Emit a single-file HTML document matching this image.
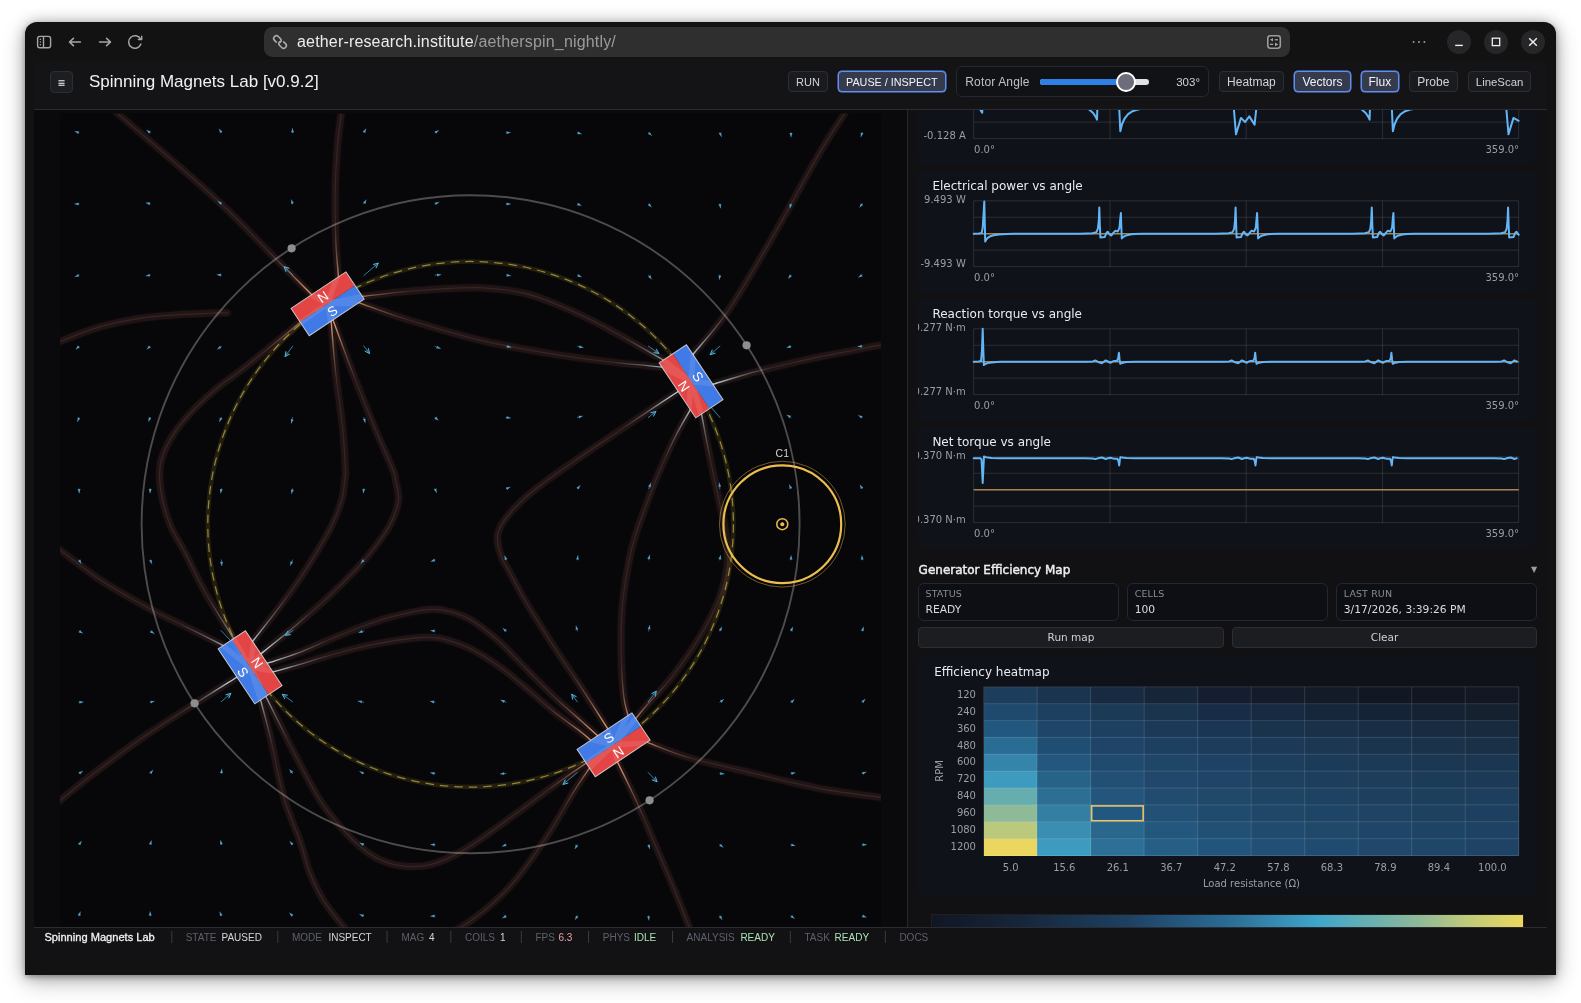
<!DOCTYPE html>
<html lang="en"><head><meta charset="utf-8"><title>Spinning Magnets Lab</title>
<style>
*{box-sizing:border-box;margin:0;padding:0}
html,body{width:1581px;height:1003px;overflow:hidden;background:#fff}
body{position:relative;font-family:"Liberation Sans", sans-serif;color:#d6d9df;-webkit-font-smoothing:antialiased}
.page,.urlt{will-change:transform}
.abs{position:absolute}
.win{position:absolute;left:25px;top:22px;width:1531px;height:952.5px;background:#121213;border-radius:12px 12px 0 0;
 box-shadow:0 6px 22px rgba(0,0,0,.3),0 0 14px rgba(0,0,0,.2),0 2px 5px rgba(0,0,0,.26)}
.url{position:absolute;left:264px;top:27px;width:1026px;height:29.5px;border-radius:8.5px;background:#2f2f30}
.urlt{position:absolute;left:296.7px;top:27px;height:29.5px;line-height:29.5px;font-size:16px;letter-spacing:.17px;color:#ececec;white-space:pre}
.urlt i{font-style:normal;color:#9b9b9e}
.cbtn{position:absolute;width:24px;height:24px;border-radius:50%;background:#262628;top:30px}
.page{position:absolute;left:34px;top:60px;width:1513px;height:906px;background:#131316;border-radius:8px;overflow:hidden}
.hdr{position:absolute;left:0;top:0;width:1513px;height:50px;background:#141417;border-bottom:1px solid #2b2c31}
.btn{position:absolute;top:11.4px;height:21px;line-height:20px;border:1px solid #2c2e35;border-radius:4px;background:#1a1b1f;color:#cfd2d9;font-size:11.5px;text-align:center;white-space:pre}
.btn.on{border-color:#5f8ff0;background:#353b4d;color:#f2f4f8;box-shadow:0 0 0 .5px #5f8ff0}
.title{position:absolute;left:55px;top:10px;height:24px;line-height:24px;font-size:17px;color:#f1f1f3;white-space:pre}
.rotor{position:absolute;left:922px;top:6.4px;width:252.5px;height:31px;border:1px solid #26282e;border-radius:6px;background:#111215}
.sb{position:absolute;left:0;top:867.4px;width:1513px;height:39px;background:#121214;border-top:1px solid #2b2c31}
.sb span{position:absolute;top:2.8px;height:13px;line-height:13px;white-space:pre}
.sb .k{font-size:10px;color:#5d616b;letter-spacing:0}
.sb .v{font-size:10px;color:#d3d6dc}
.sb .g{color:#a9e2b3}
.sb .r{color:#eaa3a3}
.sb .s{color:#3a3d45;font-size:12px;top:1.8px}
.left{position:absolute;left:0;top:50px;width:873.5px;height:817.4px;background:#0a0a0c;border-right:1px solid #26272c;overflow:hidden}
.right{position:absolute;left:874px;top:50px;width:639px;height:817.4px;background:#111113;overflow:hidden;font-family:"DejaVu Sans", "Liberation Sans", sans-serif}
</style></head><body>
<div class="win"></div>
<svg class="abs" style="left:30px;top:30px" width="120" height="24" viewBox="30 30 120 24" fill="none" stroke="#a6a6a8" stroke-width="1.5" stroke-linecap="round" stroke-linejoin="round">
<rect x="37.6" y="36.4" width="13" height="11.3" rx="2.2" stroke-width="1.4"/><path d="M43.5 36.6V47.5" stroke-width="1.4"/><g fill="#a6a6a8" stroke="none"><circle cx="40.4" cy="39.3" r=".75"/><circle cx="40.4" cy="42" r=".75"/><circle cx="40.4" cy="44.7" r=".75"/></g>
<path d="M80.4 42H69.6M73.4 38.3L69.5 42l3.9 3.7" stroke-width="1.6"/>
<path d="M99.6 42h10.8M106.6 38.3l3.9 3.7-3.9 3.7" stroke-width="1.6"/>
<path d="M140.6 39.2a6.3 6.3 0 1 0 .3 4.9"/><path d="M141.7 36.2v3.3h-3.3" stroke-width="1.4"/>
</svg>
<div class="url"></div>
<svg class="abs" style="left:270px;top:32px" width="20" height="20" viewBox="270 32 20 20" fill="none" stroke="#a9a9ab" stroke-width="1.6" stroke-linecap="round" stroke-linejoin="round">
<g transform="translate(277.4 39.4) rotate(45)"><path d="M1.2 2.7H-1.4A2.7 2.7 0 0 1 -1.4 -2.7H1.4A2.7 2.7 0 0 1 4.1 0"/></g>
<g transform="translate(282.6 44.6) rotate(225)"><path d="M1.2 2.7H-1.4A2.7 2.7 0 0 1 -1.4 -2.7H1.4A2.7 2.7 0 0 1 4.1 0"/></g>
</svg>
<div class="urlt">aether-research.institute<i>/aetherspin_nightly/</i></div>
<svg class="abs" style="left:1264px;top:32px" width="20" height="20" viewBox="1264 32 20 20">
<rect x="1267.8" y="35.7" width="12.5" height="12.5" rx="2.6" fill="#232324" stroke="#9c9c9e" stroke-width="1.6"/>
<g fill="#a4a4a6"><path d="M1273 37.9v3.6l-3.1-1.8z"/><rect x="1274.7" y="39.1" width="3.3" height="1.3"/><rect x="1269.9" y="43.7" width="3.3" height="1.3"/><path d="M1275 42.5v3.8l3.3-1.9z"/></g></svg>
<svg class="abs" style="left:1408px;top:38px" width="24" height="8" viewBox="0 0 24 8"><g fill="#9a9a9c"><circle cx="5.6" cy="4" r="1"/><circle cx="11" cy="4" r="1"/><circle cx="16.4" cy="4" r="1"/></g></svg>
<div class="cbtn" style="left:1447px"></div>
<div class="cbtn" style="left:1484px"></div>
<div class="cbtn" style="left:1521px"></div>
<svg class="abs" style="left:1447px;top:30px" width="100" height="24" viewBox="1447 30 100 24" fill="none" stroke="#f0f0f0" stroke-width="1.4" stroke-linecap="butt">
<path d="M1455.2 45.4h7.6"/><rect x="1492.3" y="38.2" width="7.4" height="7.4" stroke-width="1.3"/><path d="M1529.2 38.2l7.6 7.6M1536.8 38.2l-7.6 7.6"/></svg>
<div class="page">
<div class="hdr">
<div class="btn" style="left:16.1px;top:11.2px;width:22.8px;height:21.7px;line-height:22.4px;font-size:9.6px;font-weight:bold;font-family:&quot;DejaVu Sans&quot;,sans-serif;color:#f0f0f0;background:#1d1e22">≡</div>
<div class="title">Spinning Magnets Lab [v0.9.2]</div>
<div class="btn" style="left:754.2px;width:39.5px;font-size:11px">RUN</div>
<div class="btn on" style="left:803.8px;width:108.0px;font-size:10.8px">PAUSE / INSPECT</div>
<div class="rotor"></div>
<div class="abs" style="left:931.3px;top:14px;height:16px;line-height:16px;font-size:12px;letter-spacing:.15px;color:#bcc0c8;white-space:pre">Rotor Angle</div>
<div class="abs" style="left:1006.2px;top:19.2px;width:109.3px;height:5.6px;border-radius:3px;background:#e2e2e4"></div>
<div class="abs" style="left:1006.2px;top:19.2px;width:88px;height:5.6px;border-radius:3px 0 0 3px;background:#2f80e4"></div>
<div class="abs" style="left:1081.7px;top:12px;width:20px;height:20px;border-radius:50%;background:#6c6c7a;border:2px solid #fff"></div>
<div class="abs" style="left:1130px;top:14px;width:36px;text-align:right;height:16px;line-height:16px;font-size:11.5px;color:#cfd2d9">303°</div>
<div class="btn" style="left:1185.1px;width:64.7px;font-size:12px">Heatmap</div>
<div class="btn on" style="left:1260.2px;width:56.7px;font-size:12px">Vectors</div>
<div class="btn on" style="left:1327.0px;width:37.7px;font-size:12px">Flux</div>
<div class="btn" style="left:1375.1px;width:48.5px;font-size:12px">Probe</div>
<div class="btn" style="left:1434.3px;width:62.5px;font-size:11.4px">LineScan</div>
</div>
<div class="left">
<svg class="abs" style="left:0;top:0" width="873.5" height="817.4" viewBox="34 110 873.5 817.4" fill="none">
<defs>
<clipPath id="cv"><rect x="60" y="113.5" width="821" height="821"/></clipPath>
<mask id="mS" maskUnits="userSpaceOnUse" x="34" y="110" width="873.5" height="817.4">
<circle cx="327.6" cy="303.8" r="82" fill="url(#rg)"/>
<circle cx="613.6" cy="744.8" r="82" fill="url(#rg)"/>
</mask>
<mask id="mK" maskUnits="userSpaceOnUse" x="34" y="110" width="873.5" height="817.4">
<circle cx="691.1" cy="381.3" r="82" fill="url(#rg)"/>
<circle cx="250.1" cy="667.3" r="82" fill="url(#rg)"/>
</mask>
<radialGradient id="rg"><stop offset="0" stop-color="#fff"/><stop offset=".3" stop-color="#fff" stop-opacity=".85"/><stop offset=".62" stop-color="#fff" stop-opacity=".3"/><stop offset="1" stop-color="#fff" stop-opacity="0"/></radialGradient>
</defs>
<rect x="60" y="113.5" width="821" height="821" fill="#070709"/>
<g clip-path="url(#cv)">
<defs><path id="fl" d="M319.0 302.0C317.9 300.9 319.9 302.9 312.6 295.6C305.3 288.3 291.1 274.1 275.0 258.0C258.9 241.9 242.4 223.3 216.3 199.3C190.2 175.3 135.7 129.1 118.6 114.2C101.5 99.3 114.8 110.5 114.0 109.7M338.9 282.5C338.7 281.0 338.7 280.5 338.2 273.5C337.7 266.5 336.3 254.5 335.8 240.6C335.3 226.7 334.9 205.8 335.2 189.8C335.5 173.9 336.6 157.6 337.6 144.9C338.6 132.2 340.5 119.5 341.2 113.5C341.9 107.5 341.8 109.8 341.9 109.0M354.6 297.3C356.0 297.2 356.0 297.2 363.5 296.3C371.0 295.4 386.8 293.4 399.8 292.1C412.8 290.9 427.8 289.5 441.7 288.8C455.6 288.1 469.6 287.1 483.5 287.9C497.4 288.7 511.4 290.0 525.4 293.5C539.4 297.0 553.2 302.8 567.3 308.9C581.4 314.9 594.3 321.4 610.0 329.8C625.7 338.2 651.6 353.4 661.5 359.0C671.4 364.6 668.0 362.7 669.3 363.4M352.2 300.3C353.6 300.8 352.8 300.5 360.7 303.3C368.6 306.1 386.3 312.8 399.8 317.2C413.3 321.6 427.8 325.8 441.7 329.8C455.6 333.8 469.6 337.8 483.5 341.0C497.4 344.2 511.4 346.8 525.4 349.3C539.4 351.9 553.2 354.2 567.3 356.3C581.4 358.4 594.3 360.1 610.0 361.9C625.7 363.7 651.4 366.0 661.5 367.0C671.6 368.0 669.0 367.7 670.5 367.9M330.6 315.2C330.7 316.7 330.6 314.8 331.4 324.2C332.2 333.6 333.7 354.5 335.6 371.7C337.5 388.9 341.0 411.2 342.6 427.5C344.2 443.8 345.0 460.6 345.4 469.4C345.8 478.1 345.3 474.9 344.7 480.0C344.1 485.1 343.9 492.3 341.7 499.9C339.5 507.5 336.0 516.8 331.7 525.8C327.4 534.8 321.3 544.5 315.7 553.8C310.1 563.1 304.4 572.1 297.8 581.7C291.2 591.3 283.2 602.0 275.9 611.6C268.6 621.2 258.6 633.7 254.0 639.5C249.4 645.3 249.4 645.4 248.4 646.6M332.5 318.6C333.0 320.0 332.3 318.1 335.6 327.0C338.9 335.9 345.8 354.9 352.3 371.7C358.8 388.4 367.9 411.2 374.7 427.5C381.4 443.8 389.3 460.6 392.8 469.4C396.3 478.1 394.6 474.9 395.5 480.0C396.4 485.1 399.2 492.9 398.5 499.9C397.8 506.9 395.0 514.6 391.5 521.9C388.0 529.2 383.1 536.2 377.5 543.8C371.9 551.4 365.9 558.7 357.6 567.7C349.3 576.7 338.0 588.0 327.7 597.6C317.4 607.2 306.4 616.5 295.8 625.5C285.2 634.5 270.4 646.1 263.9 651.4C257.4 656.7 258.1 656.1 256.9 657.1M302.9 320.2C301.7 321.2 301.8 321.1 295.9 325.9C290.0 330.7 276.5 341.8 267.4 349.2C258.3 356.6 250.1 363.3 241.4 370.0C232.8 376.7 224.1 382.1 215.5 389.4C206.9 396.7 196.9 406.0 189.6 414.0C182.3 422.0 176.2 429.6 171.5 437.4C166.8 445.2 163.0 453.4 161.1 460.7C159.2 468.0 159.4 474.0 159.8 481.4C160.2 488.8 161.8 497.0 163.7 504.8C165.6 512.6 168.1 520.3 171.5 528.1C174.9 535.9 178.8 540.8 184.4 551.4C190.0 562.0 197.4 578.5 205.0 592.0C212.6 605.5 225.0 624.6 230.0 632.6C235.0 640.6 233.9 639.0 234.7 640.3M54.0 344.0C55.0 343.6 52.5 344.3 60.0 341.5C67.5 338.7 85.9 331.0 98.9 327.2C111.9 323.4 124.9 320.8 137.8 318.7C150.8 316.6 163.7 315.8 176.6 314.8C189.5 313.9 207.1 313.3 215.5 313.0C223.9 312.7 225.2 313.0 227.2 313.0M687.8 361.0C688.7 359.9 686.5 362.6 693.4 354.0C700.3 345.4 715.6 329.4 729.0 309.5C742.4 289.6 759.0 260.5 774.0 234.6C789.0 208.7 807.2 174.1 819.0 153.9C830.8 133.7 839.8 121.0 844.5 113.5C849.2 106.0 846.6 109.8 847.0 109.0M705.4 386.5C706.8 386.1 705.1 386.6 714.0 384.0C722.9 381.4 741.5 375.3 759.0 370.8C776.5 366.3 798.7 361.3 819.0 357.0C839.3 352.7 869.8 347.2 881.0 345.0C892.2 342.8 885.2 344.2 886.0 344.0M684.1 387.6C682.9 388.4 682.4 388.7 676.6 392.5C670.8 396.3 659.7 403.5 649.5 410.3C639.3 417.1 626.9 425.6 615.6 433.2C604.3 440.8 593.0 448.3 581.7 456.1C570.4 463.9 557.7 472.5 547.8 479.8C537.9 487.1 529.5 493.7 522.4 500.2C515.3 506.7 509.5 513.2 505.4 518.8C501.3 524.4 498.9 529.2 497.8 534.0C496.7 538.8 497.8 543.3 498.6 547.6C499.5 551.9 501.2 556.2 502.9 560.0C504.6 563.8 504.9 563.5 508.7 570.3C512.5 577.1 518.0 588.5 525.4 601.0C532.8 613.5 544.0 631.2 553.3 645.6C562.6 660.0 572.4 674.0 581.3 687.5C590.1 701.0 601.4 718.8 606.4 726.6C611.4 734.4 610.5 732.9 611.3 734.2M692.9 405.0C692.1 406.3 691.5 407.5 688.5 412.9C685.5 418.3 680.0 427.2 674.9 437.5C669.8 447.8 662.8 463.4 658.0 474.7C653.2 486.0 649.8 495.4 646.1 505.3C642.4 515.2 638.7 524.9 635.9 534.0C633.1 543.1 631.5 547.8 629.2 560.0C626.9 572.2 623.5 591.5 622.2 607.3C620.9 623.1 620.9 640.1 621.2 655.0C621.5 669.9 622.7 686.7 623.8 696.5C624.9 706.3 626.6 709.6 627.6 714.0C628.6 718.4 629.2 721.3 629.5 722.8M700.2 407.2C700.5 408.6 700.3 407.6 701.9 416.0C703.5 424.4 707.0 443.1 709.9 457.4C712.8 471.7 716.6 488.7 719.4 502.0C722.2 515.3 725.2 526.4 726.5 537.0C727.8 547.6 728.6 555.7 727.4 565.8C726.2 575.9 723.9 586.0 719.4 597.7C714.9 609.4 708.3 622.7 700.3 636.0C692.3 649.3 680.6 665.7 671.6 677.4C662.6 689.1 651.7 699.6 646.1 706.0C640.5 712.4 640.4 712.9 638.1 715.7C635.8 718.5 633.3 721.5 632.4 722.6M261.4 665.3C262.8 664.8 263.5 664.5 269.9 662.4C276.3 660.3 289.8 656.2 299.8 652.4C309.8 648.6 319.7 643.6 329.7 639.5C339.7 635.4 349.6 631.2 359.6 627.5C369.6 623.8 379.4 620.3 389.5 617.5C399.6 614.7 411.3 611.9 420.0 610.6C428.7 609.3 433.4 608.5 441.7 609.9C450.0 611.3 460.3 614.1 469.6 619.1C478.9 624.1 488.2 631.9 497.5 640.0C506.8 648.1 516.1 658.7 525.4 668.0C534.7 677.3 544.0 687.1 553.3 695.9C562.6 704.7 574.3 714.7 581.3 721.0C588.3 727.3 591.8 730.5 595.2 733.6C598.6 736.7 600.8 738.6 601.9 739.6M266.2 673.8C267.7 673.4 269.3 673.0 274.9 671.4C280.5 669.8 290.7 667.1 299.8 664.4C308.9 661.7 319.7 658.2 329.7 655.4C339.7 652.6 349.6 649.7 359.6 647.4C369.6 645.1 379.4 643.1 389.5 641.5C399.6 639.9 411.3 638.0 420.0 637.5C428.7 637.0 433.4 636.8 441.7 638.6C450.0 640.4 460.3 644.0 469.6 648.4C478.9 652.8 488.2 658.7 497.5 665.2C506.8 671.7 516.1 679.8 525.4 687.5C534.7 695.2 544.0 703.8 553.3 711.2C562.6 718.7 575.2 727.5 581.3 732.2C587.3 736.9 587.1 737.1 589.6 739.2C592.1 741.3 595.3 744.0 596.5 745.0M263.0 690.7C263.6 692.0 262.5 689.7 267.0 698.7C271.5 707.7 284.5 733.8 290.0 744.7C295.5 755.6 295.0 754.7 300.0 764.0C305.0 773.3 313.4 790.0 320.2 800.5C326.9 811.0 333.8 819.0 340.5 826.8C347.2 834.5 353.9 841.4 360.7 847.0C367.4 852.6 373.6 857.0 381.0 860.2C388.4 863.4 396.9 865.6 405.3 866.3C413.7 867.0 422.2 866.8 431.6 864.3C441.0 861.8 451.8 856.7 461.9 851.1C472.0 845.5 482.2 838.0 492.3 830.9C502.4 823.8 512.6 816.0 522.7 808.6C532.8 801.2 542.9 793.6 553.0 786.3C563.1 779.0 577.1 769.4 583.4 765.0C589.7 760.6 589.5 760.7 590.8 759.8M594.5 760.5C593.6 761.8 593.0 762.7 589.5 768.0C586.0 773.3 579.4 782.6 573.3 792.4C567.2 802.2 559.8 816.0 553.0 826.8C546.2 837.6 539.5 847.8 532.8 857.2C526.1 866.7 519.4 875.8 512.6 883.5C505.9 891.2 499.1 897.6 492.3 903.7C485.6 909.8 477.5 915.9 472.1 919.9C466.7 923.9 463.2 925.8 459.9 928.0C456.5 930.2 453.3 932.2 452.0 933.0M614.1 754.9C614.8 756.2 614.1 754.8 618.0 763.0C621.9 771.2 631.1 789.5 637.7 804.0C644.3 818.5 650.9 834.7 657.4 850.0C663.9 865.3 671.6 882.8 677.0 896.0C682.4 909.2 687.8 923.5 690.0 929.0M640.5 739.9C642.0 740.4 640.8 740.0 649.0 743.0C657.2 746.0 672.2 752.8 690.0 758.0C707.8 763.2 734.0 768.8 756.0 774.0C778.0 779.2 801.2 785.1 822.0 789.0C842.8 792.9 869.8 795.9 880.5 797.4C891.2 798.9 885.1 797.9 886.0 798.0M54.0 546.0C55.0 546.7 52.0 544.2 60.0 550.0C68.0 555.8 86.7 571.0 102.0 581.0C117.3 591.0 138.7 602.7 152.0 610.0C165.3 617.3 170.2 619.0 181.7 624.7C193.2 630.4 213.1 640.4 221.0 644.4C228.9 648.4 227.7 647.8 229.0 648.4M241.6 674.2C240.3 675.0 241.8 674.1 234.0 679.0C226.2 683.9 210.3 693.8 195.0 703.6C179.7 713.4 159.0 726.3 142.0 738.0C125.0 749.7 106.7 763.6 93.0 774.0C79.3 784.4 66.5 795.4 60.0 800.6C53.5 805.8 55.0 804.3 54.0 805.0M258.3 691.3C258.7 692.7 258.6 692.2 260.6 700.0C262.6 707.8 266.6 721.8 270.5 738.0C274.4 754.2 278.8 779.8 283.7 797.0C288.6 814.2 295.6 828.3 300.0 841.0C304.4 853.7 306.1 863.3 310.1 873.4C314.2 883.5 318.6 892.6 324.3 901.7C330.0 910.8 340.4 922.8 344.5 928.0C348.6 933.2 348.2 932.2 349.0 933.0"/></defs>
<g stroke-linecap="round" stroke-linejoin="round">
<use href="#fl" stroke="#6b3a38" stroke-opacity=".07" stroke-width="9.5"/>
<use href="#fl" stroke="#6b3a38" stroke-opacity=".2" stroke-width="7"/>
<use href="#fl" stroke="#c9a09a" stroke-opacity=".13" stroke-width="1.3"/>
<g mask="url(#mS)"><use href="#fl" stroke="#f7ab82" stroke-opacity=".9" stroke-width="1.4"/></g>
<g mask="url(#mK)"><use href="#fl" stroke="#c8edf7" stroke-opacity=".95" stroke-width="1.4"/></g></g>
<circle cx="470.6" cy="524.3" r="329.0" stroke="#fff" stroke-opacity=".28" stroke-width="1.9"/>
<circle cx="470.6" cy="524.3" r="262.8" stroke="#5a4e1e" stroke-opacity=".35" stroke-width="4.5"/>
<circle cx="470.6" cy="524.3" r="262.8" stroke="#cdb54c" stroke-opacity=".68" stroke-width="1.25" stroke-dasharray="8.5 6"/>
<circle cx="291.6" cy="248.3" r="4.1" fill="#8d8d8d"/>
<circle cx="746.6" cy="345.3" r="4.1" fill="#8d8d8d"/>
<circle cx="649.6" cy="800.3" r="4.1" fill="#8d8d8d"/>
<circle cx="194.6" cy="703.3" r="4.1" fill="#8d8d8d"/>
<g stroke-linecap="round"><path d="M79.0 132.7L75.0 131.4" stroke="#4aa6cf" stroke-opacity=".55" stroke-width="1"/><path d="M75.0 131.4L79.1 131.2L78.1 134.0Z" fill="#52aed6" fill-opacity=".88"/><path d="M79.0 203.9L74.8 203.9" stroke="#4aa6cf" stroke-opacity=".55" stroke-width="1"/><path d="M74.8 203.9L78.6 202.4L78.6 205.4Z" fill="#52aed6" fill-opacity=".88"/><path d="M79.0 275.1L75.1 276.7" stroke="#4aa6cf" stroke-opacity=".55" stroke-width="1"/><path d="M75.1 276.7L78.1 273.9L79.2 276.6Z" fill="#52aed6" fill-opacity=".88"/><path d="M79.0 346.3L76.1 349.3" stroke="#4aa6cf" stroke-opacity=".55" stroke-width="1"/><path d="M76.1 349.3L77.6 345.6L79.8 347.6Z" fill="#52aed6" fill-opacity=".88"/><path d="M79.0 417.5L77.6 421.5" stroke="#4aa6cf" stroke-opacity=".55" stroke-width="1"/><path d="M77.6 421.5L77.5 417.4L80.3 418.4Z" fill="#52aed6" fill-opacity=".88"/><path d="M79.0 488.7L79.3 492.9" stroke="#4aa6cf" stroke-opacity=".55" stroke-width="1"/><path d="M79.3 492.9L77.5 489.2L80.5 489.0Z" fill="#52aed6" fill-opacity=".88"/><path d="M79.0 559.9L81.1 563.5" stroke="#4aa6cf" stroke-opacity=".55" stroke-width="1"/><path d="M81.1 563.5L77.9 561.0L80.5 559.5Z" fill="#52aed6" fill-opacity=".88"/><path d="M79.0 631.1L82.6 633.2" stroke="#4aa6cf" stroke-opacity=".55" stroke-width="1"/><path d="M82.6 633.2L78.6 632.6L80.1 630.0Z" fill="#52aed6" fill-opacity=".88"/><path d="M79.0 702.3L83.2 702.1" stroke="#4aa6cf" stroke-opacity=".55" stroke-width="1"/><path d="M83.2 702.1L79.5 703.8L79.3 700.8Z" fill="#52aed6" fill-opacity=".88"/><path d="M79.0 773.5L82.6 771.3" stroke="#4aa6cf" stroke-opacity=".55" stroke-width="1"/><path d="M82.6 771.3L80.1 774.6L78.6 772.0Z" fill="#52aed6" fill-opacity=".88"/><path d="M79.0 844.7L81.5 841.3" stroke="#4aa6cf" stroke-opacity=".55" stroke-width="1"/><path d="M81.5 841.3L80.4 845.3L78.0 843.5Z" fill="#52aed6" fill-opacity=".88"/><path d="M79.0 915.9L80.3 911.9" stroke="#4aa6cf" stroke-opacity=".55" stroke-width="1"/><path d="M80.3 911.9L80.5 916.0L77.7 915.0Z" fill="#52aed6" fill-opacity=".88"/><path d="M150.2 132.7L146.8 130.2" stroke="#4aa6cf" stroke-opacity=".55" stroke-width="1"/><path d="M146.8 130.2L150.8 131.3L149.0 133.7Z" fill="#52aed6" fill-opacity=".88"/><path d="M150.2 203.9L146.2 202.8" stroke="#4aa6cf" stroke-opacity=".55" stroke-width="1"/><path d="M146.2 202.8L150.2 202.3L149.4 205.2Z" fill="#52aed6" fill-opacity=".88"/><path d="M150.2 275.1L146.1 275.9" stroke="#4aa6cf" stroke-opacity=".55" stroke-width="1"/><path d="M146.1 275.9L149.5 273.7L150.1 276.6Z" fill="#52aed6" fill-opacity=".88"/><path d="M150.2 346.3L147.0 349.0" stroke="#4aa6cf" stroke-opacity=".55" stroke-width="1"/><path d="M147.0 349.0L148.9 345.4L150.8 347.7Z" fill="#52aed6" fill-opacity=".88"/><path d="M150.2 417.5L148.5 421.3" stroke="#4aa6cf" stroke-opacity=".55" stroke-width="1"/><path d="M148.5 421.3L148.7 417.2L151.4 418.5Z" fill="#52aed6" fill-opacity=".88"/><path d="M150.2 488.7L150.1 492.9" stroke="#4aa6cf" stroke-opacity=".55" stroke-width="1"/><path d="M150.1 492.9L148.7 489.1L151.7 489.1Z" fill="#52aed6" fill-opacity=".88"/><path d="M150.2 559.9L151.8 563.8" stroke="#4aa6cf" stroke-opacity=".55" stroke-width="1"/><path d="M151.8 563.8L149.0 560.8L151.7 559.7Z" fill="#52aed6" fill-opacity=".88"/><path d="M150.2 631.1L154.2 633.5" stroke="#4aa6cf" stroke-opacity=".55" stroke-width="1"/><path d="M154.2 633.5L150.1 632.8L151.7 630.3Z" fill="#52aed6" fill-opacity=".88"/><path d="M150.2 702.3L154.2 701.2" stroke="#4aa6cf" stroke-opacity=".55" stroke-width="1"/><path d="M154.2 701.2L151.0 703.6L150.2 700.7Z" fill="#52aed6" fill-opacity=".88"/><path d="M150.2 773.5L152.8 770.2" stroke="#4aa6cf" stroke-opacity=".55" stroke-width="1"/><path d="M152.8 770.2L151.6 774.1L149.3 772.3Z" fill="#52aed6" fill-opacity=".88"/><path d="M150.2 844.7L151.3 840.7" stroke="#4aa6cf" stroke-opacity=".55" stroke-width="1"/><path d="M151.3 840.7L151.8 844.7L148.9 843.9Z" fill="#52aed6" fill-opacity=".88"/><path d="M150.2 915.9L150.2 911.7" stroke="#4aa6cf" stroke-opacity=".55" stroke-width="1"/><path d="M150.2 911.7L151.7 915.5L148.7 915.5Z" fill="#52aed6" fill-opacity=".88"/><path d="M221.4 132.7L219.2 129.1" stroke="#4aa6cf" stroke-opacity=".55" stroke-width="1"/><path d="M219.2 129.1L222.5 131.6L219.9 133.1Z" fill="#52aed6" fill-opacity=".88"/><path d="M221.4 203.9L218.1 201.3" stroke="#4aa6cf" stroke-opacity=".55" stroke-width="1"/><path d="M218.1 201.3L222.0 202.5L220.2 204.8Z" fill="#52aed6" fill-opacity=".88"/><path d="M221.4 275.1L217.1 274.7" stroke="#4aa6cf" stroke-opacity=".55" stroke-width="1"/><path d="M217.1 274.7L221.0 273.6L220.8 276.6Z" fill="#52aed6" fill-opacity=".88"/><path d="M221.4 346.3L217.5 349.2" stroke="#4aa6cf" stroke-opacity=".55" stroke-width="1"/><path d="M217.5 349.2L219.6 345.7L221.4 348.1Z" fill="#52aed6" fill-opacity=".88"/><path d="M221.4 417.5L219.5 421.5" stroke="#4aa6cf" stroke-opacity=".55" stroke-width="1"/><path d="M219.5 421.5L219.8 417.5L222.5 418.7Z" fill="#52aed6" fill-opacity=".88"/><path d="M221.4 488.7L220.7 493.1" stroke="#4aa6cf" stroke-opacity=".55" stroke-width="1"/><path d="M220.7 493.1L219.8 489.1L222.8 489.6Z" fill="#52aed6" fill-opacity=".88"/><path d="M221.4 559.9L221.8 565.7" stroke="#4aa6cf" stroke-opacity=".55" stroke-width="1"/><path d="M221.8 565.7L220.0 562.0L223.0 561.8Z" fill="#52aed6" fill-opacity=".88"/><path d="M221.4 773.5L221.8 769.2" stroke="#4aa6cf" stroke-opacity=".55" stroke-width="1"/><path d="M221.8 769.2L222.9 773.1L219.9 772.9Z" fill="#52aed6" fill-opacity=".88"/><path d="M221.4 844.7L220.6 840.6" stroke="#4aa6cf" stroke-opacity=".55" stroke-width="1"/><path d="M220.6 840.6L222.8 844.0L219.9 844.6Z" fill="#52aed6" fill-opacity=".88"/><path d="M221.4 915.9L219.8 912.0" stroke="#4aa6cf" stroke-opacity=".55" stroke-width="1"/><path d="M219.8 912.0L222.6 915.0L219.9 916.1Z" fill="#52aed6" fill-opacity=".88"/><path d="M292.6 132.7L292.4 128.5" stroke="#4aa6cf" stroke-opacity=".55" stroke-width="1"/><path d="M292.4 128.5L294.1 132.2L291.1 132.4Z" fill="#52aed6" fill-opacity=".88"/><path d="M292.6 203.9L291.5 199.9" stroke="#4aa6cf" stroke-opacity=".55" stroke-width="1"/><path d="M291.5 199.9L293.9 203.1L291.0 203.9Z" fill="#52aed6" fill-opacity=".88"/><path d="M292.6 417.5L291.4 423.2" stroke="#4aa6cf" stroke-opacity=".55" stroke-width="1"/><path d="M291.4 423.2L290.7 419.1L293.6 419.8Z" fill="#52aed6" fill-opacity=".88"/><path d="M292.6 488.7L291.6 493.4" stroke="#4aa6cf" stroke-opacity=".55" stroke-width="1"/><path d="M291.6 493.4L290.9 489.4L293.9 490.0Z" fill="#52aed6" fill-opacity=".88"/><path d="M292.6 559.9L290.4 565.3" stroke="#4aa6cf" stroke-opacity=".55" stroke-width="1"/><path d="M290.4 565.3L290.4 561.2L293.2 562.3Z" fill="#52aed6" fill-opacity=".88"/><path d="M292.6 773.5L289.7 769.6" stroke="#4aa6cf" stroke-opacity=".55" stroke-width="1"/><path d="M289.7 769.6L293.2 771.7L290.8 773.5Z" fill="#52aed6" fill-opacity=".88"/><path d="M292.6 844.7L289.9 841.5" stroke="#4aa6cf" stroke-opacity=".55" stroke-width="1"/><path d="M289.9 841.5L293.5 843.4L291.2 845.3Z" fill="#52aed6" fill-opacity=".88"/><path d="M292.6 915.9L289.6 913.0" stroke="#4aa6cf" stroke-opacity=".55" stroke-width="1"/><path d="M289.6 913.0L293.3 914.5L291.3 916.7Z" fill="#52aed6" fill-opacity=".88"/><path d="M363.8 132.7L365.9 129.1" stroke="#4aa6cf" stroke-opacity=".55" stroke-width="1"/><path d="M365.9 129.1L365.3 133.1L362.7 131.6Z" fill="#52aed6" fill-opacity=".88"/><path d="M363.8 203.9L366.2 199.9" stroke="#4aa6cf" stroke-opacity=".55" stroke-width="1"/><path d="M366.2 199.9L365.5 204.0L363.0 202.4Z" fill="#52aed6" fill-opacity=".88"/><path d="M363.8 417.5L365.2 422.6" stroke="#4aa6cf" stroke-opacity=".55" stroke-width="1"/><path d="M365.2 422.6L362.8 419.3L365.6 418.5Z" fill="#52aed6" fill-opacity=".88"/><path d="M363.8 488.7L363.3 492.9" stroke="#4aa6cf" stroke-opacity=".55" stroke-width="1"/><path d="M363.3 492.9L362.3 488.9L365.2 489.3Z" fill="#52aed6" fill-opacity=".88"/><path d="M363.8 559.9L361.1 563.1" stroke="#4aa6cf" stroke-opacity=".55" stroke-width="1"/><path d="M361.1 563.1L362.4 559.2L364.7 561.2Z" fill="#52aed6" fill-opacity=".88"/><path d="M363.8 631.1L358.7 632.5" stroke="#4aa6cf" stroke-opacity=".55" stroke-width="1"/><path d="M358.7 632.5L362.0 630.1L362.8 632.9Z" fill="#52aed6" fill-opacity=".88"/><path d="M363.8 702.3L358.1 701.1" stroke="#4aa6cf" stroke-opacity=".55" stroke-width="1"/><path d="M358.1 701.1L362.2 700.4L361.5 703.3Z" fill="#52aed6" fill-opacity=".88"/><path d="M363.8 773.5L359.8 771.6" stroke="#4aa6cf" stroke-opacity=".55" stroke-width="1"/><path d="M359.8 771.6L363.8 771.9L362.6 774.6Z" fill="#52aed6" fill-opacity=".88"/><path d="M363.8 844.7L360.0 843.0" stroke="#4aa6cf" stroke-opacity=".55" stroke-width="1"/><path d="M360.0 843.0L364.1 843.2L362.8 845.9Z" fill="#52aed6" fill-opacity=".88"/><path d="M363.8 915.9L359.8 914.5" stroke="#4aa6cf" stroke-opacity=".55" stroke-width="1"/><path d="M359.8 914.5L363.9 914.4L362.9 917.2Z" fill="#52aed6" fill-opacity=".88"/><path d="M435.0 132.7L438.6 130.6" stroke="#4aa6cf" stroke-opacity=".55" stroke-width="1"/><path d="M438.6 130.6L436.1 133.8L434.6 131.2Z" fill="#52aed6" fill-opacity=".88"/><path d="M435.0 203.9L438.9 202.3" stroke="#4aa6cf" stroke-opacity=".55" stroke-width="1"/><path d="M438.9 202.3L435.9 205.1L434.8 202.4Z" fill="#52aed6" fill-opacity=".88"/><path d="M435.0 275.1L440.8 274.7" stroke="#4aa6cf" stroke-opacity=".55" stroke-width="1"/><path d="M440.8 274.7L437.1 276.5L436.9 273.5Z" fill="#52aed6" fill-opacity=".88"/><path d="M435.0 346.3L440.4 348.5" stroke="#4aa6cf" stroke-opacity=".55" stroke-width="1"/><path d="M440.4 348.5L436.3 348.5L437.4 345.7Z" fill="#52aed6" fill-opacity=".88"/><path d="M435.0 417.5L438.2 420.2" stroke="#4aa6cf" stroke-opacity=".55" stroke-width="1"/><path d="M438.2 420.2L434.3 418.9L436.3 416.6Z" fill="#52aed6" fill-opacity=".88"/><path d="M435.0 488.7L436.5 492.6" stroke="#4aa6cf" stroke-opacity=".55" stroke-width="1"/><path d="M436.5 492.6L433.7 489.6L436.5 488.5Z" fill="#52aed6" fill-opacity=".88"/><path d="M435.0 559.9L431.1 561.4" stroke="#4aa6cf" stroke-opacity=".55" stroke-width="1"/><path d="M431.1 561.4L434.1 558.6L435.2 561.4Z" fill="#52aed6" fill-opacity=".88"/><path d="M435.0 631.1L430.8 630.6" stroke="#4aa6cf" stroke-opacity=".55" stroke-width="1"/><path d="M430.8 630.6L434.8 629.6L434.4 632.5Z" fill="#52aed6" fill-opacity=".88"/><path d="M435.0 702.3L430.3 701.3" stroke="#4aa6cf" stroke-opacity=".55" stroke-width="1"/><path d="M430.3 701.3L434.3 700.6L433.7 703.6Z" fill="#52aed6" fill-opacity=".88"/><path d="M435.0 773.5L430.6 772.8" stroke="#4aa6cf" stroke-opacity=".55" stroke-width="1"/><path d="M430.6 772.8L434.6 771.9L434.1 774.9Z" fill="#52aed6" fill-opacity=".88"/><path d="M435.0 844.7L430.8 844.6" stroke="#4aa6cf" stroke-opacity=".55" stroke-width="1"/><path d="M430.8 844.6L434.6 843.2L434.6 846.2Z" fill="#52aed6" fill-opacity=".88"/><path d="M435.0 915.9L430.8 916.2" stroke="#4aa6cf" stroke-opacity=".55" stroke-width="1"/><path d="M430.8 916.2L434.5 914.4L434.7 917.4Z" fill="#52aed6" fill-opacity=".88"/><path d="M506.2 132.7L510.4 132.4" stroke="#4aa6cf" stroke-opacity=".55" stroke-width="1"/><path d="M510.4 132.4L506.7 134.2L506.5 131.2Z" fill="#52aed6" fill-opacity=".88"/><path d="M506.2 203.9L510.4 204.0" stroke="#4aa6cf" stroke-opacity=".55" stroke-width="1"/><path d="M510.4 204.0L506.6 205.4L506.6 202.4Z" fill="#52aed6" fill-opacity=".88"/><path d="M506.2 275.1L510.6 275.8" stroke="#4aa6cf" stroke-opacity=".55" stroke-width="1"/><path d="M510.6 275.8L506.6 276.7L507.1 273.7Z" fill="#52aed6" fill-opacity=".88"/><path d="M506.2 346.3L510.9 347.3" stroke="#4aa6cf" stroke-opacity=".55" stroke-width="1"/><path d="M510.9 347.3L506.9 348.0L507.5 345.0Z" fill="#52aed6" fill-opacity=".88"/><path d="M506.2 417.5L510.4 418.0" stroke="#4aa6cf" stroke-opacity=".55" stroke-width="1"/><path d="M510.4 418.0L506.4 419.0L506.8 416.1Z" fill="#52aed6" fill-opacity=".88"/><path d="M506.2 488.7L510.1 487.2" stroke="#4aa6cf" stroke-opacity=".55" stroke-width="1"/><path d="M510.1 487.2L507.1 490.0L506.0 487.2Z" fill="#52aed6" fill-opacity=".88"/><path d="M506.2 559.9L504.7 556.0" stroke="#4aa6cf" stroke-opacity=".55" stroke-width="1"/><path d="M504.7 556.0L507.5 559.0L504.7 560.1Z" fill="#52aed6" fill-opacity=".88"/><path d="M506.2 631.1L503.0 628.4" stroke="#4aa6cf" stroke-opacity=".55" stroke-width="1"/><path d="M503.0 628.4L506.9 629.7L504.9 632.0Z" fill="#52aed6" fill-opacity=".88"/><path d="M506.2 702.3L500.8 700.1" stroke="#4aa6cf" stroke-opacity=".55" stroke-width="1"/><path d="M500.8 700.1L504.9 700.1L503.8 702.9Z" fill="#52aed6" fill-opacity=".88"/><path d="M506.2 773.5L500.4 773.9" stroke="#4aa6cf" stroke-opacity=".55" stroke-width="1"/><path d="M500.4 773.9L504.1 772.1L504.3 775.1Z" fill="#52aed6" fill-opacity=".88"/><path d="M506.2 844.7L502.3 846.3" stroke="#4aa6cf" stroke-opacity=".55" stroke-width="1"/><path d="M502.3 846.3L505.3 843.5L506.4 846.2Z" fill="#52aed6" fill-opacity=".88"/><path d="M506.2 915.9L502.6 918.0" stroke="#4aa6cf" stroke-opacity=".55" stroke-width="1"/><path d="M502.6 918.0L505.1 914.8L506.6 917.4Z" fill="#52aed6" fill-opacity=".88"/><path d="M577.4 132.7L581.4 134.1" stroke="#4aa6cf" stroke-opacity=".55" stroke-width="1"/><path d="M581.4 134.1L577.3 134.2L578.3 131.4Z" fill="#52aed6" fill-opacity=".88"/><path d="M577.4 203.9L581.2 205.6" stroke="#4aa6cf" stroke-opacity=".55" stroke-width="1"/><path d="M581.2 205.6L577.1 205.4L578.4 202.7Z" fill="#52aed6" fill-opacity=".88"/><path d="M577.4 275.1L581.4 277.0" stroke="#4aa6cf" stroke-opacity=".55" stroke-width="1"/><path d="M581.4 277.0L577.4 276.7L578.6 274.0Z" fill="#52aed6" fill-opacity=".88"/><path d="M577.4 346.3L583.1 347.5" stroke="#4aa6cf" stroke-opacity=".55" stroke-width="1"/><path d="M583.1 347.5L579.0 348.2L579.7 345.3Z" fill="#52aed6" fill-opacity=".88"/><path d="M577.4 417.5L582.5 416.1" stroke="#4aa6cf" stroke-opacity=".55" stroke-width="1"/><path d="M582.5 416.1L579.2 418.5L578.4 415.7Z" fill="#52aed6" fill-opacity=".88"/><path d="M577.4 488.7L580.1 485.5" stroke="#4aa6cf" stroke-opacity=".55" stroke-width="1"/><path d="M580.1 485.5L578.8 489.4L576.5 487.4Z" fill="#52aed6" fill-opacity=".88"/><path d="M577.4 559.9L577.9 555.7" stroke="#4aa6cf" stroke-opacity=".55" stroke-width="1"/><path d="M577.9 555.7L578.9 559.7L576.0 559.3Z" fill="#52aed6" fill-opacity=".88"/><path d="M577.4 631.1L576.0 626.0" stroke="#4aa6cf" stroke-opacity=".55" stroke-width="1"/><path d="M576.0 626.0L578.4 629.3L575.6 630.1Z" fill="#52aed6" fill-opacity=".88"/><path d="M577.4 844.7L575.0 848.7" stroke="#4aa6cf" stroke-opacity=".55" stroke-width="1"/><path d="M575.0 848.7L575.7 844.6L578.2 846.2Z" fill="#52aed6" fill-opacity=".88"/><path d="M577.4 915.9L575.3 919.5" stroke="#4aa6cf" stroke-opacity=".55" stroke-width="1"/><path d="M575.3 919.5L575.9 915.5L578.5 917.0Z" fill="#52aed6" fill-opacity=".88"/><path d="M648.6 132.7L651.6 135.6" stroke="#4aa6cf" stroke-opacity=".55" stroke-width="1"/><path d="M651.6 135.6L647.9 134.1L649.9 131.9Z" fill="#52aed6" fill-opacity=".88"/><path d="M648.6 203.9L651.3 207.1" stroke="#4aa6cf" stroke-opacity=".55" stroke-width="1"/><path d="M651.3 207.1L647.7 205.2L650.0 203.3Z" fill="#52aed6" fill-opacity=".88"/><path d="M648.6 275.1L651.5 279.0" stroke="#4aa6cf" stroke-opacity=".55" stroke-width="1"/><path d="M651.5 279.0L648.0 276.9L650.4 275.1Z" fill="#52aed6" fill-opacity=".88"/><path d="M648.6 488.7L650.8 483.3" stroke="#4aa6cf" stroke-opacity=".55" stroke-width="1"/><path d="M650.8 483.3L650.8 487.4L648.0 486.3Z" fill="#52aed6" fill-opacity=".88"/><path d="M648.6 559.9L649.6 555.2" stroke="#4aa6cf" stroke-opacity=".55" stroke-width="1"/><path d="M649.6 555.2L650.3 559.2L647.3 558.6Z" fill="#52aed6" fill-opacity=".88"/><path d="M648.6 631.1L649.8 625.4" stroke="#4aa6cf" stroke-opacity=".55" stroke-width="1"/><path d="M649.8 625.4L650.5 629.5L647.6 628.8Z" fill="#52aed6" fill-opacity=".88"/><path d="M648.6 844.7L649.7 848.7" stroke="#4aa6cf" stroke-opacity=".55" stroke-width="1"/><path d="M649.7 848.7L647.3 845.5L650.2 844.7Z" fill="#52aed6" fill-opacity=".88"/><path d="M648.6 915.9L648.8 920.1" stroke="#4aa6cf" stroke-opacity=".55" stroke-width="1"/><path d="M648.8 920.1L647.1 916.4L650.1 916.2Z" fill="#52aed6" fill-opacity=".88"/><path d="M719.8 132.7L721.4 136.6" stroke="#4aa6cf" stroke-opacity=".55" stroke-width="1"/><path d="M721.4 136.6L718.6 133.6L721.3 132.5Z" fill="#52aed6" fill-opacity=".88"/><path d="M719.8 203.9L720.6 208.0" stroke="#4aa6cf" stroke-opacity=".55" stroke-width="1"/><path d="M720.6 208.0L718.4 204.6L721.3 204.0Z" fill="#52aed6" fill-opacity=".88"/><path d="M719.8 275.1L719.4 279.4" stroke="#4aa6cf" stroke-opacity=".55" stroke-width="1"/><path d="M719.4 279.4L718.3 275.5L721.3 275.7Z" fill="#52aed6" fill-opacity=".88"/><path d="M719.8 488.7L719.4 482.9" stroke="#4aa6cf" stroke-opacity=".55" stroke-width="1"/><path d="M719.4 482.9L721.2 486.6L718.2 486.8Z" fill="#52aed6" fill-opacity=".88"/><path d="M719.8 559.9L720.5 555.5" stroke="#4aa6cf" stroke-opacity=".55" stroke-width="1"/><path d="M720.5 555.5L721.4 559.5L718.4 559.0Z" fill="#52aed6" fill-opacity=".88"/><path d="M719.8 631.1L721.7 627.1" stroke="#4aa6cf" stroke-opacity=".55" stroke-width="1"/><path d="M721.7 627.1L721.4 631.1L718.7 629.9Z" fill="#52aed6" fill-opacity=".88"/><path d="M719.8 702.3L723.7 699.4" stroke="#4aa6cf" stroke-opacity=".55" stroke-width="1"/><path d="M723.7 699.4L721.6 702.9L719.8 700.5Z" fill="#52aed6" fill-opacity=".88"/><path d="M719.8 773.5L724.1 773.9" stroke="#4aa6cf" stroke-opacity=".55" stroke-width="1"/><path d="M724.1 773.9L720.2 775.0L720.4 772.0Z" fill="#52aed6" fill-opacity=".88"/><path d="M719.8 844.7L723.1 847.3" stroke="#4aa6cf" stroke-opacity=".55" stroke-width="1"/><path d="M723.1 847.3L719.2 846.1L721.0 843.8Z" fill="#52aed6" fill-opacity=".88"/><path d="M719.8 915.9L722.0 919.5" stroke="#4aa6cf" stroke-opacity=".55" stroke-width="1"/><path d="M722.0 919.5L718.7 917.0L721.3 915.5Z" fill="#52aed6" fill-opacity=".88"/><path d="M791.0 132.7L791.0 136.9" stroke="#4aa6cf" stroke-opacity=".55" stroke-width="1"/><path d="M791.0 136.9L789.5 133.1L792.5 133.1Z" fill="#52aed6" fill-opacity=".88"/><path d="M791.0 203.9L789.9 207.9" stroke="#4aa6cf" stroke-opacity=".55" stroke-width="1"/><path d="M789.9 207.9L789.4 203.9L792.3 204.7Z" fill="#52aed6" fill-opacity=".88"/><path d="M791.0 275.1L788.4 278.4" stroke="#4aa6cf" stroke-opacity=".55" stroke-width="1"/><path d="M788.4 278.4L789.6 274.5L791.9 276.3Z" fill="#52aed6" fill-opacity=".88"/><path d="M791.0 346.3L787.0 347.4" stroke="#4aa6cf" stroke-opacity=".55" stroke-width="1"/><path d="M787.0 347.4L790.2 345.0L791.0 347.9Z" fill="#52aed6" fill-opacity=".88"/><path d="M791.0 417.5L787.0 415.1" stroke="#4aa6cf" stroke-opacity=".55" stroke-width="1"/><path d="M787.0 415.1L791.1 415.8L789.5 418.3Z" fill="#52aed6" fill-opacity=".88"/><path d="M791.0 488.7L789.4 484.8" stroke="#4aa6cf" stroke-opacity=".55" stroke-width="1"/><path d="M789.4 484.8L792.2 487.8L789.5 488.9Z" fill="#52aed6" fill-opacity=".88"/><path d="M791.0 559.9L791.1 555.7" stroke="#4aa6cf" stroke-opacity=".55" stroke-width="1"/><path d="M791.1 555.7L792.5 559.5L789.5 559.5Z" fill="#52aed6" fill-opacity=".88"/><path d="M791.0 631.1L792.7 627.3" stroke="#4aa6cf" stroke-opacity=".55" stroke-width="1"/><path d="M792.7 627.3L792.5 631.4L789.8 630.1Z" fill="#52aed6" fill-opacity=".88"/><path d="M791.0 702.3L794.2 699.6" stroke="#4aa6cf" stroke-opacity=".55" stroke-width="1"/><path d="M794.2 699.6L792.3 703.2L790.4 700.9Z" fill="#52aed6" fill-opacity=".88"/><path d="M791.0 773.5L795.1 772.7" stroke="#4aa6cf" stroke-opacity=".55" stroke-width="1"/><path d="M795.1 772.7L791.7 774.9L791.1 772.0Z" fill="#52aed6" fill-opacity=".88"/><path d="M791.0 844.7L795.0 845.8" stroke="#4aa6cf" stroke-opacity=".55" stroke-width="1"/><path d="M795.0 845.8L791.0 846.3L791.8 843.4Z" fill="#52aed6" fill-opacity=".88"/><path d="M791.0 915.9L794.4 918.4" stroke="#4aa6cf" stroke-opacity=".55" stroke-width="1"/><path d="M794.4 918.4L790.4 917.3L792.2 914.9Z" fill="#52aed6" fill-opacity=".88"/><path d="M862.2 132.7L860.9 136.7" stroke="#4aa6cf" stroke-opacity=".55" stroke-width="1"/><path d="M860.9 136.7L860.7 132.6L863.5 133.6Z" fill="#52aed6" fill-opacity=".88"/><path d="M862.2 203.9L859.7 207.3" stroke="#4aa6cf" stroke-opacity=".55" stroke-width="1"/><path d="M859.7 207.3L860.8 203.3L863.2 205.1Z" fill="#52aed6" fill-opacity=".88"/><path d="M862.2 275.1L858.6 277.3" stroke="#4aa6cf" stroke-opacity=".55" stroke-width="1"/><path d="M858.6 277.3L861.1 274.0L862.6 276.6Z" fill="#52aed6" fill-opacity=".88"/><path d="M862.2 346.3L858.0 346.5" stroke="#4aa6cf" stroke-opacity=".55" stroke-width="1"/><path d="M858.0 346.5L861.7 344.8L861.9 347.8Z" fill="#52aed6" fill-opacity=".88"/><path d="M862.2 417.5L858.6 415.4" stroke="#4aa6cf" stroke-opacity=".55" stroke-width="1"/><path d="M858.6 415.4L862.6 416.0L861.1 418.6Z" fill="#52aed6" fill-opacity=".88"/><path d="M862.2 488.7L860.1 485.1" stroke="#4aa6cf" stroke-opacity=".55" stroke-width="1"/><path d="M860.1 485.1L863.3 487.6L860.7 489.1Z" fill="#52aed6" fill-opacity=".88"/><path d="M862.2 559.9L861.9 555.7" stroke="#4aa6cf" stroke-opacity=".55" stroke-width="1"/><path d="M861.9 555.7L863.7 559.4L860.7 559.6Z" fill="#52aed6" fill-opacity=".88"/><path d="M862.2 631.1L863.6 627.1" stroke="#4aa6cf" stroke-opacity=".55" stroke-width="1"/><path d="M863.6 627.1L863.7 631.2L860.9 630.2Z" fill="#52aed6" fill-opacity=".88"/><path d="M862.2 702.3L865.1 699.3" stroke="#4aa6cf" stroke-opacity=".55" stroke-width="1"/><path d="M865.1 699.3L863.6 703.0L861.4 701.0Z" fill="#52aed6" fill-opacity=".88"/><path d="M862.2 773.5L866.1 771.9" stroke="#4aa6cf" stroke-opacity=".55" stroke-width="1"/><path d="M866.1 771.9L863.1 774.7L862.0 772.0Z" fill="#52aed6" fill-opacity=".88"/><path d="M862.2 844.7L866.4 844.7" stroke="#4aa6cf" stroke-opacity=".55" stroke-width="1"/><path d="M866.4 844.7L862.6 846.2L862.6 843.2Z" fill="#52aed6" fill-opacity=".88"/><path d="M862.2 915.9L866.2 917.2" stroke="#4aa6cf" stroke-opacity=".55" stroke-width="1"/><path d="M866.2 917.2L862.1 917.4L863.1 914.6Z" fill="#52aed6" fill-opacity=".88"/><path d="M363.9 275.5L378.3 263.1" stroke="#3f94bd" stroke-opacity=".85" stroke-width="1"/><path d="M376.2 267.8L378.3 263.1L373.4 264.4" stroke="#55b2da" stroke-width="1" fill="#55b2da" fill-opacity=".25" stroke-linejoin="round"/><path d="M292.7 274.7L284.1 266.6" stroke="#3f94bd" stroke-opacity=".85" stroke-width="1"/><path d="M289.0 268.2L284.1 266.6L285.9 271.4" stroke="#55b2da" stroke-width="1" fill="#55b2da" fill-opacity=".25" stroke-linejoin="round"/><path d="M292.7 346.1L285.0 356.6" stroke="#3f94bd" stroke-opacity=".85" stroke-width="1"/><path d="M285.9 351.6L285.0 356.6L289.5 354.2" stroke="#55b2da" stroke-width="1" fill="#55b2da" fill-opacity=".25" stroke-linejoin="round"/><path d="M363.7 345.9L369.6 353.6" stroke="#3f94bd" stroke-opacity=".85" stroke-width="1"/><path d="M365.1 351.3L369.6 353.6L368.5 348.6" stroke="#55b2da" stroke-width="1" fill="#55b2da" fill-opacity=".25" stroke-linejoin="round"/><path d="M648.3 346.1L658.9 353.5" stroke="#3f94bd" stroke-opacity=".85" stroke-width="1"/><path d="M653.9 352.7L658.9 353.5L656.4 349.1" stroke="#55b2da" stroke-width="1" fill="#55b2da" fill-opacity=".25" stroke-linejoin="round"/><path d="M719.9 346.1L710.2 354.7" stroke="#3f94bd" stroke-opacity=".85" stroke-width="1"/><path d="M712.2 350.0L710.2 354.7L715.1 353.3" stroke="#55b2da" stroke-width="1" fill="#55b2da" fill-opacity=".25" stroke-linejoin="round"/><path d="M648.3 417.5L655.9 411.5" stroke="#3f94bd" stroke-opacity=".85" stroke-width="1"/><path d="M653.7 416.1L655.9 411.5L650.9 412.6" stroke="#55b2da" stroke-width="1" fill="#55b2da" fill-opacity=".25" stroke-linejoin="round"/><path d="M719.9 417.5L707.5 403.1" stroke="#3f94bd" stroke-opacity=".85" stroke-width="1"/><path d="M712.2 405.2L707.5 403.1L708.8 408.0" stroke="#55b2da" stroke-width="1" fill="#55b2da" fill-opacity=".25" stroke-linejoin="round"/><path d="M577.3 701.9L571.7 694.2" stroke="#3f94bd" stroke-opacity=".85" stroke-width="1"/><path d="M576.2 696.6L571.7 694.2L572.6 699.2" stroke="#55b2da" stroke-width="1" fill="#55b2da" fill-opacity=".25" stroke-linejoin="round"/><path d="M648.2 701.9L656.3 691.2" stroke="#3f94bd" stroke-opacity=".85" stroke-width="1"/><path d="M655.3 696.2L656.3 691.2L651.8 693.5" stroke="#55b2da" stroke-width="1" fill="#55b2da" fill-opacity=".25" stroke-linejoin="round"/><path d="M577.3 772.5L563.0 784.5" stroke="#3f94bd" stroke-opacity=".85" stroke-width="1"/><path d="M565.1 779.9L563.0 784.5L567.9 783.2" stroke="#55b2da" stroke-width="1" fill="#55b2da" fill-opacity=".25" stroke-linejoin="round"/><path d="M648.2 772.5L657.1 781.8" stroke="#3f94bd" stroke-opacity=".85" stroke-width="1"/><path d="M652.3 780.0L657.1 781.8L655.5 777.0" stroke="#55b2da" stroke-width="1" fill="#55b2da" fill-opacity=".25" stroke-linejoin="round"/><path d="M221.0 630.5L233.8 644.0" stroke="#3f94bd" stroke-opacity=".85" stroke-width="1"/><path d="M229.0 642.2L233.8 644.0L232.2 639.1" stroke="#55b2da" stroke-width="1" fill="#55b2da" fill-opacity=".25" stroke-linejoin="round"/><path d="M292.8 630.5L285.3 635.3" stroke="#3f94bd" stroke-opacity=".85" stroke-width="1"/><path d="M288.0 631.0L285.3 635.3L290.4 634.7" stroke="#55b2da" stroke-width="1" fill="#55b2da" fill-opacity=".25" stroke-linejoin="round"/><path d="M221.3 701.7L230.9 693.3" stroke="#3f94bd" stroke-opacity=".85" stroke-width="1"/><path d="M228.9 698.0L230.9 693.3L226.0 694.7" stroke="#55b2da" stroke-width="1" fill="#55b2da" fill-opacity=".25" stroke-linejoin="round"/><path d="M292.5 701.7L282.3 694.3" stroke="#3f94bd" stroke-opacity=".85" stroke-width="1"/><path d="M287.3 695.2L282.3 694.3L284.7 698.8" stroke="#55b2da" stroke-width="1" fill="#55b2da" fill-opacity=".25" stroke-linejoin="round"/></g>
<g transform="translate(327.6 303.8) rotate(-33.7)"><rect x="-33.0" y="-16.4" width="66.0" height="16.4" fill="#e34444"/><rect x="-33.0" y="0" width="66.0" height="16.4" fill="#3f7ae6"/><rect x="-33.0" y="-16.4" width="66.0" height="32.8" fill="none" stroke="#e8e6e6" stroke-opacity=".8" stroke-width="1"/><text x="0" y="-3.6" text-anchor="middle" font-size="13.5" fill="#fff" font-family="&quot;Liberation Sans&quot;, sans-serif">N</text><text x="0" y="13.4" text-anchor="middle" font-size="13.5" fill="#fff" font-family="&quot;Liberation Sans&quot;, sans-serif">S</text></g>
<g transform="translate(691.1 381.3) rotate(56.3)"><rect x="-33.0" y="-16.4" width="66.0" height="16.4" fill="#3f7ae6"/><rect x="-33.0" y="0" width="66.0" height="16.4" fill="#e34444"/><rect x="-33.0" y="-16.4" width="66.0" height="32.8" fill="none" stroke="#e8e6e6" stroke-opacity=".8" stroke-width="1"/><text x="0" y="-3.6" text-anchor="middle" font-size="13.5" fill="#fff" font-family="&quot;Liberation Sans&quot;, sans-serif">S</text><text x="0" y="13.4" text-anchor="middle" font-size="13.5" fill="#fff" font-family="&quot;Liberation Sans&quot;, sans-serif">N</text></g>
<g transform="translate(613.6 744.8) rotate(-33.7)"><rect x="-33.0" y="-16.4" width="66.0" height="16.4" fill="#3f7ae6"/><rect x="-33.0" y="0" width="66.0" height="16.4" fill="#e34444"/><rect x="-33.0" y="-16.4" width="66.0" height="32.8" fill="none" stroke="#e8e6e6" stroke-opacity=".8" stroke-width="1"/><text x="0" y="-3.6" text-anchor="middle" font-size="13.5" fill="#fff" font-family="&quot;Liberation Sans&quot;, sans-serif">S</text><text x="0" y="13.4" text-anchor="middle" font-size="13.5" fill="#fff" font-family="&quot;Liberation Sans&quot;, sans-serif">N</text></g>
<g transform="translate(250.1 667.3) rotate(56.3)"><rect x="-33.0" y="-16.4" width="66.0" height="16.4" fill="#e34444"/><rect x="-33.0" y="0" width="66.0" height="16.4" fill="#3f7ae6"/><rect x="-33.0" y="-16.4" width="66.0" height="32.8" fill="none" stroke="#e8e6e6" stroke-opacity=".8" stroke-width="1"/><text x="0" y="-3.6" text-anchor="middle" font-size="13.5" fill="#fff" font-family="&quot;Liberation Sans&quot;, sans-serif">N</text><text x="0" y="13.4" text-anchor="middle" font-size="13.5" fill="#fff" font-family="&quot;Liberation Sans&quot;, sans-serif">S</text></g>
<clipPath id="mg"><rect x="-32.5" y="-15.899999999999999" width="65.0" height="31.799999999999997" transform="translate(327.6 303.8) rotate(-33.7)"/><rect x="-32.5" y="-15.899999999999999" width="65.0" height="31.799999999999997" transform="translate(691.1 381.3) rotate(56.3)"/><rect x="-32.5" y="-15.899999999999999" width="65.0" height="31.799999999999997" transform="translate(613.6 744.8) rotate(-33.7)"/><rect x="-32.5" y="-15.899999999999999" width="65.0" height="31.799999999999997" transform="translate(250.1 667.3) rotate(56.3)"/></clipPath>
<g clip-path="url(#mg)"><path d="M312.6 295.6L327.6 303.8M338.2 273.5L327.6 303.8M363.5 296.3L327.6 303.8M661.5 359.0L691.1 381.3M360.7 303.3L327.6 303.8M661.5 367.0L691.1 381.3M331.4 324.2L327.6 303.8M254.0 639.5L250.1 667.3M335.6 327.0L327.6 303.8M263.9 651.4L250.1 667.3M295.9 325.9L327.6 303.8M230.0 632.6L250.1 667.3M693.4 354.0L691.1 381.3M714.0 384.0L691.1 381.3M676.6 392.5L691.1 381.3M606.4 726.6L613.6 744.8M688.5 412.9L691.1 381.3M627.6 714.0L613.6 744.8M701.9 416.0L691.1 381.3M638.1 715.7L613.6 744.8M269.9 662.4L250.1 667.3M595.2 733.6L613.6 744.8M274.9 671.4L250.1 667.3M589.6 739.2L613.6 744.8M267.0 698.7L250.1 667.3M583.4 765.0L613.6 744.8M589.5 768.0L613.6 744.8M618.0 763.0L613.6 744.8M649.0 743.0L613.6 744.8M221.0 644.4L250.1 667.3M234.0 679.0L250.1 667.3M260.6 700.0L250.1 667.3" stroke="#fff" stroke-opacity=".1" stroke-width="5.5" stroke-linecap="round"/></g>
<circle cx="782.3" cy="524.2" r="62.9" stroke="#e0b04a" stroke-opacity=".55" stroke-width=".9"/>
<circle cx="782.3" cy="524.2" r="58.9" stroke="#ecbd4f" stroke-width="2.2"/>
<circle cx="782.3" cy="524.2" r="5.5" stroke="#ecbd4f" stroke-width="1.5"/><circle cx="782.3" cy="524.2" r="2" fill="#ecbd4f"/>
<text x="782.3" y="457" text-anchor="middle" font-size="10.5" fill="#d0d3d8" font-family="&quot;Liberation Sans&quot;, sans-serif">C1</text>
</g></svg>
</div>
<div class="right">
<style>
.card{position:absolute;background:#0f1218;border-radius:5px;overflow:hidden}
.ct{position:absolute;font-size:12px;line-height:14px;height:14px;color:#e9ebef;white-space:pre}
.yl{position:absolute;left:-60px;width:107.4px;text-align:right;font-size:10px;line-height:12px;height:12px;color:#9a9ea7;white-space:pre}
.xl{position:absolute;font-size:10px;line-height:12px;height:12px;color:#9a9ea7;white-space:pre}
.yl.hm{}
.st{position:absolute;top:473.2px;width:200.4px;height:37.4px;border:1px solid #232730;border-radius:6px;background:#0d0f14}
.st b{position:absolute;left:6.4px;top:4px;font-weight:normal;font-size:9.5px;line-height:11px;color:#878c97;white-space:pre;letter-spacing:.1px}
.st i{position:absolute;left:6.4px;top:19.2px;font-style:normal;font-size:10.7px;line-height:13px;color:#d9dce2;white-space:pre}
.pb{position:absolute;top:517px;height:21.3px;line-height:19.5px;border:1px solid #2c2e35;border-radius:4px;background:#1c1d21;color:#cdd0d7;font-size:10.5px;text-align:center}
</style>
<div class="card" style="left:10.4px;top:-67.0px;width:618.4px;height:119.5px">
<div class="ct" style="left:14px;top:7.6px">Coil current vs angle</div>
<svg class="abs" style="left:0;top:0" width="618.4" height="119.5" viewBox="0 0 618.4 119.5" fill="none"><path d="M55.70 29.80V95.60M55.70 29.80H600.70M191.95 29.80V95.60M55.70 46.25H600.70M328.20 29.80V95.60M55.70 62.70H600.70M464.45 29.80V95.60M55.70 79.15H600.70M600.70 29.80V95.60M55.70 95.60H600.70" stroke="#ffffff" stroke-opacity=".12" stroke-width="1"/><path d="M55.7 57.0 L61.2 65.0 L64.2 69.6 L64.8 47.0 L66.6 37.0 L71.6 57.0 L81.6 62.0 L156.6 62.7 L166.6 64.0 L171.2 66.5 L175.1 70.0 L177.6 73.6 L179.0 76.6 L179.6 57.0 L181.6 41.0 L185.6 57.0 L191.6 60.0 L197.6 57.0 L200.2 41.0 L201.3 66.5 L202.3 88.3 L204.1 81.0 L206.6 75.5 L210.1 71.2 L214.6 68.2 L220.5 66.4 L231.6 64.0 L246.6 62.7 L296.6 62.7 L309.6 61.0 L314.1 53.0 L315.2 41.0 L315.9 66.5 L318.0 91.3 L323.0 74.9 L327.1 79.0 L331.3 73.4 L336.6 81.6 L338.2 66.5 L339.2 43.0 L341.6 55.0 L349.6 61.5 L371.6 62.7 L429.2 62.7 L439.2 64.0 L443.8 66.5 L447.7 70.0 L450.2 73.6 L451.6 76.6 L452.2 57.0 L454.2 41.0 L458.2 57.0 L464.2 60.0 L470.2 57.0 L472.8 41.0 L473.9 66.5 L474.9 88.3 L476.7 81.0 L479.2 75.5 L482.7 71.2 L487.2 68.2 L493.1 66.4 L504.2 64.0 L519.2 62.7 L569.1 62.7 L582.1 61.0 L586.6 53.0 L587.7 41.0 L588.4 66.5 L590.5 91.3 L595.5 74.9 L600.6 77.8" stroke="#62b5f6" stroke-width="2" stroke-linejoin="round" stroke-linecap="round"/></svg>
<div class="yl" style="top:23.3px">0.128 A</div>
<div class="yl" style="top:86.9px">-0.128 A</div>
<div class="xl" style="left:55.7px;top:100.6px">0.0°</div>
<div class="xl" style="left:540.7px;width:60px;text-align:right;top:100.6px">359.0°</div>
</div>
<div class="card" style="left:10.4px;top:61.0px;width:618.4px;height:119.5px">
<div class="ct" style="left:14px;top:7.6px">Electrical power vs angle</div>
<svg class="abs" style="left:0;top:0" width="618.4" height="119.5" viewBox="0 0 618.4 119.5" fill="none"><path d="M55.70 29.80V95.60M55.70 29.80H600.70M191.95 29.80V95.60M55.70 46.25H600.70M328.20 29.80V95.60M55.70 62.70H600.70M464.45 29.80V95.60M55.70 79.15H600.70M600.70 29.80V95.60M55.70 95.60H600.70" stroke="#ffffff" stroke-opacity=".12" stroke-width="1"/><path d="M55.7 62.70H600.7" stroke="#a98350" stroke-width="1.5"/><path d="M55.7 62.7 L60.7 62.5 L63.7 62.1 L64.7 56.7 L65.7 40.7 L66.3 30.4 L66.7 47.7 L67.2 70.6 L68.2 68.7 L69.7 66.9 L72.2 65.3 L75.7 64.2 L80.7 63.5 L88.7 62.9 L95.7 62.7 L161.9 62.7 L174.4 62.3 L178.4 61.1 L179.9 57.7 L180.8 49.7 L181.3 36.5 L181.8 52.7 L182.4 66.4 L184.5 66.2 L186.8 66.0 L188.3 62.1 L189.6 60.7 L191.5 63.3 L191.9 63.7 L191.9 63.7 L193.4 64.5 L195.3 61.9 L197.2 59.8 L199.9 60.4 L201.5 56.7 L202.4 46.7 L202.9 42.1 L203.3 54.7 L203.8 67.4 L204.9 66.3 L206.6 65.1 L208.9 64.2 L212.3 63.5 L216.1 63.0 L223.9 62.7 L298.2 62.7 L310.7 62.3 L314.7 61.1 L316.2 57.7 L317.0 49.7 L317.6 36.5 L318.1 52.7 L318.6 66.4 L320.8 66.2 L323.0 66.0 L324.6 62.1 L325.9 60.7 L327.8 63.3 L328.2 63.7 L328.2 63.7 L329.6 64.5 L331.6 61.9 L333.4 59.8 L336.2 60.4 L337.8 56.7 L338.7 46.7 L339.1 42.1 L339.6 54.7 L340.1 67.4 L341.2 66.3 L342.9 65.1 L345.2 64.2 L348.6 63.5 L352.4 63.0 L360.2 62.7 L434.4 62.7 L446.9 62.3 L450.9 61.1 L452.4 57.7 L453.2 49.7 L453.8 36.5 L454.3 52.7 L454.9 66.4 L457.1 66.2 L459.2 66.0 L460.8 62.1 L462.1 60.7 L464.1 63.3 L464.4 63.7 L464.4 63.7 L465.9 64.5 L467.8 61.9 L469.7 59.8 L472.4 60.4 L474.1 56.7 L474.9 46.7 L475.4 42.1 L475.8 54.7 L476.3 67.4 L477.4 66.3 L479.1 65.1 L481.4 64.2 L484.8 63.5 L488.6 63.0 L496.4 62.7 L570.7 62.7 L583.2 62.3 L587.2 61.1 L588.7 57.7 L589.5 49.7 L590.1 36.5 L590.6 52.7 L591.2 66.4 L593.3 66.2 L595.5 66.0 L597.1 62.1 L598.4 60.7 L600.3 63.3 L600.7 63.7" stroke="#62b5f6" stroke-width="2" stroke-linejoin="round" stroke-linecap="round"/></svg>
<div class="yl" style="top:23.3px">9.493 W</div>
<div class="yl" style="top:86.9px">-9.493 W</div>
<div class="xl" style="left:55.7px;top:100.6px">0.0°</div>
<div class="xl" style="left:540.7px;width:60px;text-align:right;top:100.6px">359.0°</div>
</div>
<div class="card" style="left:10.4px;top:189.0px;width:618.4px;height:119.5px">
<div class="ct" style="left:14px;top:7.6px">Reaction torque vs angle</div>
<svg class="abs" style="left:0;top:0" width="618.4" height="119.5" viewBox="0 0 618.4 119.5" fill="none"><path d="M55.70 29.80V95.60M55.70 29.80H600.70M191.95 29.80V95.60M55.70 46.25H600.70M328.20 29.80V95.60M55.70 62.70H600.70M464.45 29.80V95.60M55.70 79.15H600.70M600.70 29.80V95.60M55.70 95.60H600.70" stroke="#ffffff" stroke-opacity=".12" stroke-width="1"/><path d="M55.7 62.70H600.7" stroke="#a98350" stroke-width="1.5"/><path d="M55.7 62.7 L60.7 62.5 L63.1 61.9 L64.0 50.7 L64.7 29.7 L65.3 50.7 L65.9 66.1 L67.2 65.0 L69.7 64.1 L73.7 63.4 L81.7 62.7 L166.9 62.7 L174.9 62.4 L177.3 61.4 L180.9 63.3 L183.9 64.2 L185.9 62.7 L187.6 61.4 L189.9 62.5 L192.4 63.8 L194.3 62.7 L196.2 61.9 L198.9 61.9 L200.2 59.2 L200.9 53.8 L201.6 60.7 L202.3 64.8 L203.9 63.9 L208.5 63.0 L216.9 62.7 L303.2 62.7 L311.2 62.4 L313.6 61.4 L317.2 63.3 L320.2 64.2 L322.2 62.7 L323.9 61.4 L326.2 62.5 L328.7 63.8 L330.6 62.7 L332.5 61.9 L335.2 61.9 L336.5 59.2 L337.2 53.8 L337.9 60.7 L338.6 64.8 L340.2 63.9 L344.8 63.0 L353.2 62.7 L439.4 62.7 L447.4 62.4 L449.8 61.4 L453.4 63.3 L456.4 64.2 L458.4 62.7 L460.1 61.4 L462.4 62.5 L464.9 63.8 L466.8 62.7 L468.8 61.9 L471.4 61.9 L472.8 59.2 L473.4 53.8 L474.1 60.7 L474.8 64.8 L476.4 63.9 L481.1 63.0 L489.4 62.7 L575.7 62.7 L583.7 62.4 L586.1 61.4 L589.7 63.3 L592.7 64.2 L594.7 62.7 L596.4 61.4 L598.7 62.5" stroke="#62b5f6" stroke-width="2" stroke-linejoin="round" stroke-linecap="round"/></svg>
<div class="yl" style="top:23.3px">0.277 N·m</div>
<div class="yl" style="top:86.9px">-0.277 N·m</div>
<div class="xl" style="left:55.7px;top:100.6px">0.0°</div>
<div class="xl" style="left:540.7px;width:60px;text-align:right;top:100.6px">359.0°</div>
</div>
<div class="card" style="left:10.4px;top:317.0px;width:618.4px;height:119.5px">
<div class="ct" style="left:14px;top:7.6px">Net torque vs angle</div>
<svg class="abs" style="left:0;top:0" width="618.4" height="119.5" viewBox="0 0 618.4 119.5" fill="none"><path d="M55.70 29.80V95.60M55.70 29.80H600.70M191.95 29.80V95.60M55.70 46.25H600.70M328.20 29.80V95.60M55.70 62.70H600.70M464.45 29.80V95.60M55.70 79.15H600.70M600.70 29.80V95.60M55.70 95.60H600.70" stroke="#ffffff" stroke-opacity=".12" stroke-width="1"/><path d="M55.7 62.70H600.7" stroke="#a98350" stroke-width="1.5"/><path d="M55.7 31.3 L62.2 31.3 L63.5 32.3 L64.1 43.3 L64.7 56.0 L65.4 41.3 L66.0 29.5 L67.2 30.0 L69.7 30.6 L73.7 31.0 L81.7 31.3 L166.9 31.3 L174.9 31.5 L177.3 32.1 L180.9 31.0 L183.9 30.5 L185.9 31.3 L187.6 32.0 L189.9 31.3 L192.4 30.7 L194.3 31.3 L196.2 31.7 L199.4 31.7 L200.5 34.3 L201.2 38.4 L201.9 32.3 L202.5 30.1 L203.9 30.6 L208.5 31.1 L216.9 31.3 L303.2 31.3 L311.2 31.5 L313.6 32.1 L317.2 31.0 L320.2 30.5 L322.2 31.3 L323.9 32.0 L326.2 31.3 L328.7 30.7 L330.6 31.3 L332.5 31.7 L335.7 31.7 L336.8 34.3 L337.5 38.4 L338.2 32.3 L338.8 30.1 L340.2 30.6 L344.8 31.1 L353.2 31.3 L439.4 31.3 L447.4 31.5 L449.8 32.1 L453.4 31.0 L456.4 30.5 L458.4 31.3 L460.1 32.0 L462.4 31.3 L464.9 30.7 L466.8 31.3 L468.8 31.7 L471.9 31.7 L473.1 34.3 L473.8 38.4 L474.4 32.3 L475.1 30.1 L476.4 30.6 L481.1 31.1 L489.4 31.3 L575.7 31.3 L583.7 31.5 L586.1 32.1 L589.7 31.0 L592.7 30.5 L594.7 31.3 L596.4 32.0 L598.7 31.3" stroke="#62b5f6" stroke-width="2" stroke-linejoin="round" stroke-linecap="round"/></svg>
<div class="yl" style="top:23.3px">0.370 N·m</div>
<div class="yl" style="top:86.9px">-0.370 N·m</div>
<div class="xl" style="left:55.7px;top:100.6px">0.0°</div>
<div class="xl" style="left:540.7px;width:60px;text-align:right;top:100.6px">359.0°</div>
</div>
<div class="abs" style="left:10.6px;top:452.7px;font-size:12px;line-height:14px;color:#eceef2;white-space:pre;-webkit-text-stroke:.45px #eceef2">Generator Efficiency Map</div>
<div class="abs" style="left:623.0px;top:455.0px;font-size:8px;line-height:10px;color:#9a9ea7">▼</div>
<div class="st" style="left:10.2px"><b>STATUS</b><i>READY</i></div>
<div class="st" style="left:219.3px"><b>CELLS</b><i>100</i></div>
<div class="st" style="left:428.4px"><b>LAST RUN</b><i>3/17/2026, 3:39:26 PM</i></div>
<div class="pb" style="left:10.2px;width:305.6px">Run map</div>
<div class="pb" style="left:324.3px;width:304.5px">Clear</div>
<div class="card" style="left:10.4px;top:546.7px;width:618.4px;height:240.6px">
<div class="ct" style="left:15.8px;top:8.6px">Efficiency heatmap</div>
<svg class="abs" style="left:0;top:0" width="618.4" height="240.6" viewBox="0 0 618.4 240.6" shape-rendering="crispEdges"><rect x="65.60" y="29.80" width="53.82" height="17.17" fill="#1c3d5c"/><rect x="119.12" y="29.80" width="53.82" height="17.17" fill="#1a3450"/><rect x="172.64" y="29.80" width="53.82" height="17.17" fill="#172a42"/><rect x="226.16" y="29.80" width="53.82" height="17.17" fill="#162638"/><rect x="279.68" y="29.80" width="53.82" height="17.17" fill="#141e30"/><rect x="333.20" y="29.80" width="53.82" height="17.17" fill="#141c2c"/><rect x="386.72" y="29.80" width="53.82" height="17.17" fill="#131a28"/><rect x="440.24" y="29.80" width="53.82" height="17.17" fill="#121724"/><rect x="493.76" y="29.80" width="53.82" height="17.17" fill="#121622"/><rect x="547.28" y="29.80" width="53.82" height="17.17" fill="#131723"/><rect x="65.60" y="46.67" width="53.82" height="17.17" fill="#1f4a6e"/><rect x="119.12" y="46.67" width="53.82" height="17.17" fill="#1d4060"/><rect x="172.64" y="46.67" width="53.82" height="17.17" fill="#1b3a55"/><rect x="226.16" y="46.67" width="53.82" height="17.17" fill="#1a344e"/><rect x="279.68" y="46.67" width="53.82" height="17.17" fill="#182c47"/><rect x="333.20" y="46.67" width="53.82" height="17.17" fill="#172a42"/><rect x="386.72" y="46.67" width="53.82" height="17.17" fill="#16273c"/><rect x="440.24" y="46.67" width="53.82" height="17.17" fill="#152337"/><rect x="493.76" y="46.67" width="53.82" height="17.17" fill="#152233"/><rect x="547.28" y="46.67" width="53.82" height="17.17" fill="#15212f"/><rect x="65.60" y="63.54" width="53.82" height="17.17" fill="#22587f"/><rect x="119.12" y="63.54" width="53.82" height="17.17" fill="#1f4668"/><rect x="172.64" y="63.54" width="53.82" height="17.17" fill="#1d4060"/><rect x="226.16" y="63.54" width="53.82" height="17.17" fill="#1c3a58"/><rect x="279.68" y="63.54" width="53.82" height="17.17" fill="#1b3654"/><rect x="333.20" y="63.54" width="53.82" height="17.17" fill="#1a334d"/><rect x="386.72" y="63.54" width="53.82" height="17.17" fill="#1a3048"/><rect x="440.24" y="63.54" width="53.82" height="17.17" fill="#192d44"/><rect x="493.76" y="63.54" width="53.82" height="17.17" fill="#182b41"/><rect x="547.28" y="63.54" width="53.82" height="17.17" fill="#182a3e"/><rect x="65.60" y="80.41" width="53.82" height="17.17" fill="#2a6d94"/><rect x="119.12" y="80.41" width="53.82" height="17.17" fill="#204e72"/><rect x="172.64" y="80.41" width="53.82" height="17.17" fill="#1f4468"/><rect x="226.16" y="80.41" width="53.82" height="17.17" fill="#1e4060"/><rect x="279.68" y="80.41" width="53.82" height="17.17" fill="#1d3c5b"/><rect x="333.20" y="80.41" width="53.82" height="17.17" fill="#1c3957"/><rect x="386.72" y="80.41" width="53.82" height="17.17" fill="#1b3752"/><rect x="440.24" y="80.41" width="53.82" height="17.17" fill="#1b344e"/><rect x="493.76" y="80.41" width="53.82" height="17.17" fill="#1a324a"/><rect x="547.28" y="80.41" width="53.82" height="17.17" fill="#1a3047"/><rect x="65.60" y="97.28" width="53.82" height="17.17" fill="#3584a9"/><rect x="119.12" y="97.28" width="53.82" height="17.17" fill="#23577e"/><rect x="172.64" y="97.28" width="53.82" height="17.17" fill="#204b6e"/><rect x="226.16" y="97.28" width="53.82" height="17.17" fill="#1f4567"/><rect x="279.68" y="97.28" width="53.82" height="17.17" fill="#1e4264"/><rect x="333.20" y="97.28" width="53.82" height="17.17" fill="#1d3e5d"/><rect x="386.72" y="97.28" width="53.82" height="17.17" fill="#1c3b59"/><rect x="440.24" y="97.28" width="53.82" height="17.17" fill="#1c3955"/><rect x="493.76" y="97.28" width="53.82" height="17.17" fill="#1b3752"/><rect x="547.28" y="97.28" width="53.82" height="17.17" fill="#1b3650"/><rect x="65.60" y="114.15" width="53.82" height="17.17" fill="#3d9bbf"/><rect x="119.12" y="114.15" width="53.82" height="17.17" fill="#276387"/><rect x="172.64" y="114.15" width="53.82" height="17.17" fill="#224f74"/><rect x="226.16" y="114.15" width="53.82" height="17.17" fill="#21476c"/><rect x="279.68" y="114.15" width="53.82" height="17.17" fill="#1f4467"/><rect x="333.20" y="114.15" width="53.82" height="17.17" fill="#1e4160"/><rect x="386.72" y="114.15" width="53.82" height="17.17" fill="#1d3f5d"/><rect x="440.24" y="114.15" width="53.82" height="17.17" fill="#1d3d5a"/><rect x="493.76" y="114.15" width="53.82" height="17.17" fill="#1c3b57"/><rect x="547.28" y="114.15" width="53.82" height="17.17" fill="#1c3a57"/><rect x="65.60" y="131.02" width="53.82" height="17.17" fill="#66adb0"/><rect x="119.12" y="131.02" width="53.82" height="17.17" fill="#2d6f94"/><rect x="172.64" y="131.02" width="53.82" height="17.17" fill="#23557d"/><rect x="226.16" y="131.02" width="53.82" height="17.17" fill="#214c70"/><rect x="279.68" y="131.02" width="53.82" height="17.17" fill="#204869"/><rect x="333.20" y="131.02" width="53.82" height="17.17" fill="#1f4565"/><rect x="386.72" y="131.02" width="53.82" height="17.17" fill="#1e4261"/><rect x="440.24" y="131.02" width="53.82" height="17.17" fill="#1e405e"/><rect x="493.76" y="131.02" width="53.82" height="17.17" fill="#1d3f5c"/><rect x="547.28" y="131.02" width="53.82" height="17.17" fill="#1d3e5c"/><rect x="65.60" y="147.89" width="53.82" height="17.17" fill="#8fba97"/><rect x="119.12" y="147.89" width="53.82" height="17.17" fill="#337ea3"/><rect x="172.64" y="147.89" width="53.82" height="17.17" fill="#22587f"/><rect x="226.16" y="147.89" width="53.82" height="17.17" fill="#225175"/><rect x="279.68" y="147.89" width="53.82" height="17.17" fill="#204b6e"/><rect x="333.20" y="147.89" width="53.82" height="17.17" fill="#204768"/><rect x="386.72" y="147.89" width="53.82" height="17.17" fill="#1f4566"/><rect x="440.24" y="147.89" width="53.82" height="17.17" fill="#1e4363"/><rect x="493.76" y="147.89" width="53.82" height="17.17" fill="#1e4160"/><rect x="547.28" y="147.89" width="53.82" height="17.17" fill="#1d4060"/><rect x="65.60" y="164.76" width="53.82" height="17.17" fill="#bbc97d"/><rect x="119.12" y="164.76" width="53.82" height="17.17" fill="#3a8eb2"/><rect x="172.64" y="164.76" width="53.82" height="17.17" fill="#29678d"/><rect x="226.16" y="164.76" width="53.82" height="17.17" fill="#23577e"/><rect x="279.68" y="164.76" width="53.82" height="17.17" fill="#215074"/><rect x="333.20" y="164.76" width="53.82" height="17.17" fill="#204b6e"/><rect x="386.72" y="164.76" width="53.82" height="17.17" fill="#204969"/><rect x="440.24" y="164.76" width="53.82" height="17.17" fill="#1f4668"/><rect x="493.76" y="164.76" width="53.82" height="17.17" fill="#1e4465"/><rect x="547.28" y="164.76" width="53.82" height="17.17" fill="#1e4263"/><rect x="65.60" y="181.63" width="53.82" height="17.17" fill="#ebd660"/><rect x="119.12" y="181.63" width="53.82" height="17.17" fill="#3d9bbf"/><rect x="172.64" y="181.63" width="53.82" height="17.17" fill="#2c7097"/><rect x="226.16" y="181.63" width="53.82" height="17.17" fill="#265f85"/><rect x="279.68" y="181.63" width="53.82" height="17.17" fill="#22557d"/><rect x="333.20" y="181.63" width="53.82" height="17.17" fill="#214f75"/><rect x="386.72" y="181.63" width="53.82" height="17.17" fill="#204b70"/><rect x="440.24" y="181.63" width="53.82" height="17.17" fill="#1f486c"/><rect x="493.76" y="181.63" width="53.82" height="17.17" fill="#1e4669"/><rect x="547.28" y="181.63" width="53.82" height="17.17" fill="#1e4364"/><path d="M65.60 29.80V198.50M65.60 29.80H600.80M119.12 29.80V198.50M65.60 46.67H600.80M172.64 29.80V198.50M65.60 63.54H600.80M226.16 29.80V198.50M65.60 80.41H600.80M279.68 29.80V198.50M65.60 97.28H600.80M333.20 29.80V198.50M65.60 114.15H600.80M386.72 29.80V198.50M65.60 131.02H600.80M440.24 29.80V198.50M65.60 147.89H600.80M493.76 29.80V198.50M65.60 164.76H600.80M547.28 29.80V198.50M65.60 181.63H600.80M600.80 29.80V198.50M65.60 198.50H600.80" stroke="#fff" stroke-opacity=".13" stroke-width="1" fill="none" shape-rendering="auto"/><rect x="173.64" y="148.89" width="51.52" height="14.87" fill="none" stroke="#e9c46a" stroke-width="1.6" shape-rendering="auto"/></svg>
<div class="yl" style="top:32.3px;width:117.6px">120</div>
<div class="yl" style="top:49.2px;width:117.6px">240</div>
<div class="yl" style="top:66.1px;width:117.6px">360</div>
<div class="yl" style="top:82.9px;width:117.6px">480</div>
<div class="yl" style="top:99.8px;width:117.6px">600</div>
<div class="yl" style="top:116.7px;width:117.6px">720</div>
<div class="yl" style="top:133.6px;width:117.6px">840</div>
<div class="yl" style="top:150.4px;width:117.6px">960</div>
<div class="yl" style="top:167.3px;width:117.6px">1080</div>
<div class="yl" style="top:184.2px;width:117.6px">1200</div>
<div class="xl" style="left:62.4px;width:60px;text-align:center;top:205.2px">5.0</div>
<div class="xl" style="left:115.9px;width:60px;text-align:center;top:205.2px">15.6</div>
<div class="xl" style="left:169.4px;width:60px;text-align:center;top:205.2px">26.1</div>
<div class="xl" style="left:222.9px;width:60px;text-align:center;top:205.2px">36.7</div>
<div class="xl" style="left:276.4px;width:60px;text-align:center;top:205.2px">47.2</div>
<div class="xl" style="left:330.0px;width:60px;text-align:center;top:205.2px">57.8</div>
<div class="xl" style="left:383.5px;width:60px;text-align:center;top:205.2px">68.3</div>
<div class="xl" style="left:437.0px;width:60px;text-align:center;top:205.2px">78.9</div>
<div class="xl" style="left:490.5px;width:60px;text-align:center;top:205.2px">89.4</div>
<div class="xl" style="left:544.0px;width:60px;text-align:center;top:205.2px">100.0</div>
<div class="xl" style="left:263.1px;width:140px;text-align:center;top:221.2px">Load resistance (Ω)</div>
<div class="xl" style="left:-8.4px;width:60px;text-align:center;top:108.1px;transform:rotate(-90deg)">RPM</div>
</div>
<div class="abs" style="left:23.8px;top:804.6px;width:591.2px;height:14px;background:linear-gradient(90deg,#111624 0%,#16263a 15%,#1d4062 33%,#2a6c95 50%,#40a6cb 65.5%,#8cb99a 82%,#c2cb79 91%,#ecd75f 100%);box-shadow:0 0 0 1px rgba(255,255,255,.06)"></div>
</div>
<div class="sb">
<span style="left:10.4px;font-size:11.1px;color:#f2f2f4;-webkit-text-stroke:.3px #f2f2f4">Spinning Magnets Lab</span>
<span class="s" style="left:136.3px">|</span>
<span class="k" style="left:151.7px">STATE</span>
<span class="v " style="left:187.5px">PAUSED</span>
<span class="s" style="left:242.2px">|</span>
<span class="k" style="left:258.0px">MODE</span>
<span class="v " style="left:294.4px">INSPECT</span>
<span class="s" style="left:351.4px">|</span>
<span class="k" style="left:367.4px">MAG</span>
<span class="v " style="left:395.0px">4</span>
<span class="s" style="left:415.2px">|</span>
<span class="k" style="left:431.0px">COILS</span>
<span class="v " style="left:466.0px">1</span>
<span class="s" style="left:485.7px">|</span>
<span class="k" style="left:501.4px">FPS</span>
<span class="v r" style="left:524.5px">6.3</span>
<span class="s" style="left:553.0px">|</span>
<span class="k" style="left:568.8px">PHYS</span>
<span class="v g" style="left:600.0px">IDLE</span>
<span class="s" style="left:636.9px">|</span>
<span class="k" style="left:652.6px">ANALYSIS</span>
<span class="v g" style="left:706.4px">READY</span>
<span class="s" style="left:754.8px">|</span>
<span class="k" style="left:770.5px">TASK</span>
<span class="v g" style="left:800.6px">READY</span>
<span class="s" style="left:849.7px">|</span>
<span class="k" style="left:865.4px">DOCS</span>
</div>
</div>
</body></html>
